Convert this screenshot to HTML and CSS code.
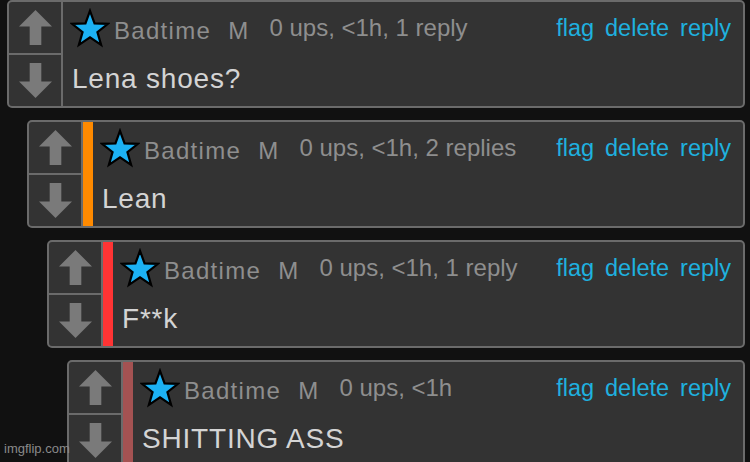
FILE: index.html
```html
<!DOCTYPE html>
<html lang="en">
<head>
  <meta charset="UTF-8">
  <meta name="viewport" content="width=device-width, initial-scale=1">
  <title>Comments</title>
  <link rel="stylesheet" href="styles.css">
</head>
<body>

  <div class="thread">

    <div class="comment depth-0">
      <div class="votes">
        <div class="vote"><svg viewBox="0 0 34 36"><polygon points="17,0 34,17 23,17 23,36 11,36 11,17 0,17"/></svg></div>
        <div class="vote"><svg viewBox="0 0 34 36"><polygon points="17,36 34,19 23,19 23,0 11,0 11,19 0,19"/></svg></div>
      </div>
      <div class="content">
        <div class="head">
          <svg class="star" viewBox="0 0 36 36"><polygon points="18,2.5 22.1,13.8 34.2,14.2 24.7,21.7 28,33.2 18,26.5 8,33.2 11.3,21.7 1.8,14.2 13.9,13.8"/></svg>
          <span class="user">Badtime</span>
          <span class="gender">M</span>
          <span class="meta">0 ups, &lt;1h, 1 reply</span>
          <span class="actions"><a href="#">flag</a><a href="#">delete</a><a href="#">reply</a></span>
        </div>
        <div class="text">Lena shoes?</div>
      </div>
    </div>

    <div class="comment depth-1">
      <div class="votes">
        <div class="vote"><svg viewBox="0 0 34 36"><polygon points="17,0 34,17 23,17 23,36 11,36 11,17 0,17"/></svg></div>
        <div class="vote"><svg viewBox="0 0 34 36"><polygon points="17,36 34,19 23,19 23,0 11,0 11,19 0,19"/></svg></div>
      </div>
      <div class="bar orange"></div>
      <div class="content">
        <div class="head">
          <svg class="star" viewBox="0 0 36 36"><polygon points="18,2.5 22.1,13.8 34.2,14.2 24.7,21.7 28,33.2 18,26.5 8,33.2 11.3,21.7 1.8,14.2 13.9,13.8"/></svg>
          <span class="user">Badtime</span>
          <span class="gender">M</span>
          <span class="meta">0 ups, &lt;1h, 2 replies</span>
          <span class="actions"><a href="#">flag</a><a href="#">delete</a><a href="#">reply</a></span>
        </div>
        <div class="text">Lean</div>
      </div>
    </div>

    <div class="comment depth-2">
      <div class="votes">
        <div class="vote"><svg viewBox="0 0 34 36"><polygon points="17,0 34,17 23,17 23,36 11,36 11,17 0,17"/></svg></div>
        <div class="vote"><svg viewBox="0 0 34 36"><polygon points="17,36 34,19 23,19 23,0 11,0 11,19 0,19"/></svg></div>
      </div>
      <div class="bar red"></div>
      <div class="content">
        <div class="head">
          <svg class="star" viewBox="0 0 36 36"><polygon points="18,2.5 22.1,13.8 34.2,14.2 24.7,21.7 28,33.2 18,26.5 8,33.2 11.3,21.7 1.8,14.2 13.9,13.8"/></svg>
          <span class="user">Badtime</span>
          <span class="gender">M</span>
          <span class="meta">0 ups, &lt;1h, 1 reply</span>
          <span class="actions"><a href="#">flag</a><a href="#">delete</a><a href="#">reply</a></span>
        </div>
        <div class="text">F**k</div>
      </div>
    </div>

    <div class="comment depth-3">
      <div class="votes">
        <div class="vote"><svg viewBox="0 0 34 36"><polygon points="17,0 34,17 23,17 23,36 11,36 11,17 0,17"/></svg></div>
        <div class="vote"><svg viewBox="0 0 34 36"><polygon points="17,36 34,19 23,19 23,0 11,0 11,19 0,19"/></svg></div>
      </div>
      <div class="bar rose"></div>
      <div class="content">
        <div class="head">
          <svg class="star" viewBox="0 0 36 36"><polygon points="18,2.5 22.1,13.8 34.2,14.2 24.7,21.7 28,33.2 18,26.5 8,33.2 11.3,21.7 1.8,14.2 13.9,13.8"/></svg>
          <span class="user">Badtime</span>
          <span class="gender">M</span>
          <span class="meta">0 ups, &lt;1h</span>
          <span class="actions"><a href="#">flag</a><a href="#">delete</a><a href="#">reply</a></span>
        </div>
        <div class="text">SHITTING ASS</div>
      </div>
    </div>

  </div>

  <div class="watermark">imgflip.com</div>

</body>
</html>
```

FILE: styles.css
```css
:root {
  --page-bg: #111111;
  --card-bg: #333333;
  --border-color: #6b6b6b;
  --muted-text: #8e8e8e;
  --body-text: #d4d4d4;
  --link-color: #1fb0df;
  --arrow-color: #7a7a7a;
}

* {
  box-sizing: border-box;
  margin: 0;
  padding: 0;
}

html, body {
  height: 100%;
  overflow: hidden;
}

body {
  background-color: var(--page-bg);
  font-family: 'Liberation Sans', Arial, sans-serif;
  position: relative;
}

.thread {
  display: flex;
  flex-direction: column;
  gap: 12px;
}

.comment {
  display: flex;
  height: 108px;
  margin-right: 5px;
  background-color: var(--card-bg);
  border: 2px solid var(--border-color);
  border-radius: 5px;
  overflow: hidden;
}

.depth-0 { margin-left: 7px; }
.depth-1 { margin-left: 27px; }
.depth-2 { margin-left: 47px; }
.depth-3 { margin-left: 67px; }

.votes {
  width: 54px;
  flex-shrink: 0;
  display: flex;
  flex-direction: column;
  border-right: 2px solid var(--border-color);
}

.vote {
  flex: 1;
  display: flex;
  align-items: center;
  justify-content: center;
}

.vote + .vote {
  border-top: 2px solid var(--border-color);
}

.vote svg {
  width: 33px;
  height: 35px;
  fill: var(--arrow-color);
}

.bar {
  width: 10px;
  flex-shrink: 0;
}

.bar.orange { background-color: #ff8a00; }
.bar.red { background-color: #ff3434; }
.bar.rose { background-color: #a45252; }

.content {
  flex: 1;
  padding: 0 12px 0 9px;
  display: flex;
  flex-direction: column;
}

.head {
  height: 52px;
  display: flex;
  align-items: center;
}

.star {
  width: 40px;
  height: 40px;
  fill: #1cb1f3;
  stroke: #000;
  stroke-width: 2;
  stroke-linejoin: miter;
  margin: 0 4px 0 -2px;
  flex-shrink: 0;
}

.user, .gender {
  color: var(--muted-text);
  font-size: 24px;
  letter-spacing: 1.3px;
  padding-top: 6px;
}

.gender {
  margin-left: 17px;
}

.meta {
  color: var(--muted-text);
  font-size: 24px;
  margin-left: 20px;
  white-space: nowrap;
}

.actions {
  margin-left: auto;
  display: flex;
  gap: 11px;
}

.actions a {
  color: var(--link-color);
  font-size: 23.5px;
  text-decoration: none;
}

.text {
  color: var(--body-text);
  font-size: 28px;
  letter-spacing: 0.8px;
  padding-top: 9px;
}

.watermark {
  position: absolute;
  left: 4px;
  bottom: 6px;
  color: #8a8a8a;
  font-size: 13px;
}
```
